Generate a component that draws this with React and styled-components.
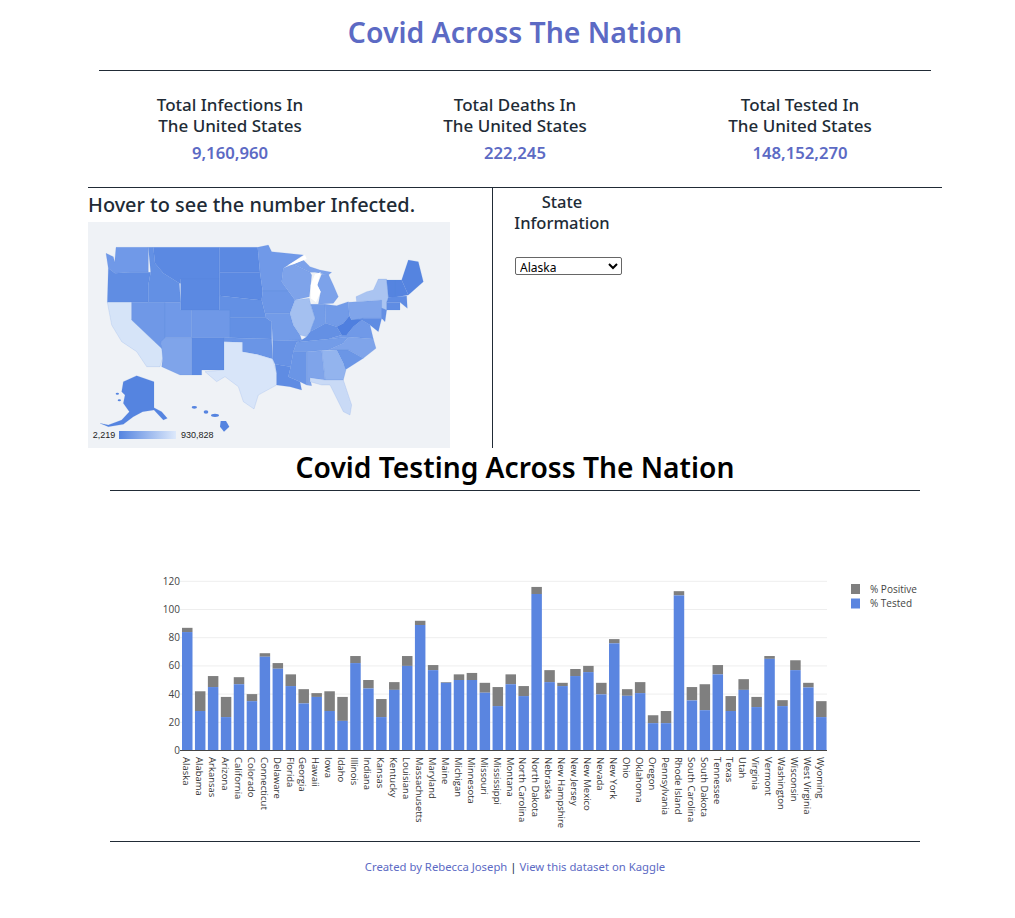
import React from "react";
import styled, { createGlobalStyle } from "styled-components";

const GlobalStyle = createGlobalStyle`
  html, body { margin: 0; padding: 0; background: #fff; overflow-x: hidden; }
  body { font-family: "Noto Sans", "Open Sans", sans-serif; color: #212b36; }
`;

const stats = [
  { label: "Total Infections In", value: "9,160,960" },
  { label: "Total Deaths In", value: "222,245" },
  { label: "Total Tested In", value: "148,152,270" },
];

// [name, total % (positive + tested), % tested]
const testing = [
  ["Alaska", 87, 84], ["Alabama", 42, 28], ["Arkansas", 52.8, 45], ["Arizona", 38, 23.7],
  ["California", 52, 47], ["Colorado", 40, 35], ["Connecticut", 69, 66.5], ["Delaware", 62, 58],
  ["Florida", 54, 45.7], ["Georgia", 43.5, 33.4], ["Hawaii", 40.7, 38], ["Iowa", 42, 28],
  ["Idaho", 38, 21], ["Illinois", 67, 62], ["Indiana", 50, 44], ["Kansas", 36.5, 23.7],
  ["Kentucky", 48.5, 43], ["Louisiana", 67, 60], ["Massachusetts", 92, 89], ["Maryland", 60.6, 57],
  ["Maine", 48.5, 48], ["Michigan", 54, 50], ["Minnesota", 55, 50], ["Missouri", 48, 41],
  ["Mississippi", 45, 31.5], ["Montana", 54, 47], ["North Carolina", 45.7, 38.6], ["North Dakota", 116, 111],
  ["Nebraska", 57, 48.5], ["New Hampshire", 48, 45.7], ["New Jersey", 57.8, 52.8], ["New Mexico", 60, 55.6],
  ["Nevada", 48, 39.8], ["New York", 79, 76], ["Ohio", 43.5, 38.8], ["Oklahoma", 48.5, 40.7],
  ["Oregon", 25, 19.4], ["Pennsylvania", 28, 19.4], ["Rhode Island", 113, 110], ["South Carolina", 45, 35.5],
  ["South Dakota", 47, 28.6], ["Tennessee", 60.6, 54], ["Texas", 38.6, 28], ["Utah", 50.6, 43],
  ["Virginia", 38, 30.8], ["Vermont", 67, 65], ["Washington", 35.7, 31.5], ["Wisconsin", 64, 57],
  ["West Virginia", 48, 44.7], ["Wyoming", 35, 23.7],
];

const stateNames = testing.map((row) => row[0]);

// state outlines traced by eye from the reference, [colour, points]
const mapStates = [
  ["#7099e8", "78,205 100,215 104,232 108,187 205,187 205,262 150,262 105,265 85,250"],
  ["#608de3", "85,250 105,265 150,262 212,262 205,300 205,352 82,352"],
  ["#d6e4f8", "82,352 155,352 155,405 250,495 248,520 240,545 200,545 170,500 125,470 95,420"],
  ["#6f98e7", "155,352 255,352 255,490 243,470 250,495 155,405"],
  ["#6390e4", "205,187 220,187 225,235 250,265 298,295 302,352 205,352 205,300 212,262"],
  ["#5b89e2", "220,187 418,187 418,282 302,282 302,295 298,295 250,265 225,235"],
  ["#5b89e2", "302,282 418,282 418,375 302,375"],
  ["#7099e8", "255,352 302,352 302,375 335,375 335,458 255,458"],
  ["#6f98e7", "335,375 450,375 450,458 335,458"],
  ["#7fa4ea", "255,458 335,458 335,570 300,570 245,545 248,520 243,470"],
  ["#5d8be3", "335,458 432,458 432,555 365,555 365,570 335,570"],
  ["#5b89e2", "418,187 533,187 540,262 418,262"],
  ["#5b89e2", "418,262 540,262 548,318 545,345 535,345 418,332"],
  ["#6390e4", "418,332 535,345 545,345 555,385 558,398 450,398 450,375 418,375"],
  ["#6390e4", "450,398 558,398 575,410 575,462 450,458"],
  ["#6a95e6", "432,458 575,462 578,522 530,508 487,500 487,472 432,470"],
  ["#d8e5f9", "432,470 487,472 487,500 530,508 578,522 590,565 590,600 535,630 522,672 490,650 475,605 435,575 410,590 375,560 432,555"],
  ["#7099e8", "533,187 565,180 575,200 620,205 670,210 610,250 605,290 625,318 548,318 540,262"],
  ["#6d97e7", "548,318 625,318 645,345 630,385 555,385 545,345"],
  ["#729be8", "555,385 630,385 640,420 660,450 665,465 578,468 575,410 558,398"],
  ["#6792e5", "578,468 665,465 650,472 640,500 632,545 585,538 578,522"],
  ["#5f8ce3", "585,538 632,545 625,575 660,590 665,615 630,605 590,600 590,565"],
  ["#7ea3ea", "610,250 640,238 665,250 690,262 695,270 692,300 688,335 645,345 625,318 605,290"],
  ["#a4c0f0", "645,345 688,340 692,358 705,400 695,430 680,455 660,450 640,420 630,385"],
  ["#739ce8", "692,358 735,358 737,415 710,430 690,440 705,400"],
  ["#7ca2ea", "725,268 745,268 760,300 775,335 760,355 715,358 722,320 712,300"],
  ["#7ca2ea", "640,238 670,225 690,245 720,255 755,262 745,270 705,262 690,262 665,250"],
  ["#729be8", "735,358 770,362 805,350 808,392 790,415 770,425 737,415"],
  ["#6490e4", "665,465 680,455 690,440 710,430 737,415 770,425 785,450 745,462 650,472"],
  ["#739ce8", "650,472 745,462 805,456 790,475 745,495 680,500 640,500"],
  ["#7099e8", "745,462 785,450 800,450 820,425 845,405 870,420 880,462 805,456"],
  ["#4f7fdf", "770,425 790,415 808,392 815,405 850,400 845,405 820,425 800,450 785,450"],
  ["#7fa4ea", "805,352 830,350 905,345 915,370 905,400 850,400 815,405 808,392"],
  ["#aac4f1", "828,335 860,320 880,315 895,282 920,282 925,337 920,352 920,375 905,370 905,345 830,350"],
  ["#6590e4", "905,370 920,375 915,410 905,400"],
  ["#5f8ce3", "815,405 850,400 905,400 895,440 870,420 845,405"],
  ["#7fa4ea", "745,495 790,475 805,456 880,462 888,490 850,520 805,495 770,495"],
  ["#6b96e6", "770,495 805,495 850,520 795,555 790,535"],
  ["#93b4ee", "725,497 770,495 790,535 798,555 790,585 735,585"],
  ["#7fa4ea", "680,500 725,497 735,585 690,580 695,602 680,600"],
  ["#6a95e6", "640,500 680,500 680,600 660,590 625,575 632,545"],
  ["#c9daf6", "690,578 735,585 790,585 815,660 810,690 790,680 765,630 750,600 725,600 690,590"],
  ["#5584e0", "985,225 1015,230 1030,290 985,330 965,285"],
  ["#5584e0", "945,285 965,285 985,330 945,337"],
  ["#5584e0", "920,285 945,285 945,337 925,337"],
  ["#5f8ce3", "925,337 980,333 982,370 960,352 920,352"],
  ["#5f8ce3", "920,352 960,352 960,375 920,375"],
  ["#5584e0", "130,590 170,572 222,590 222,668 245,680 262,700 250,705 222,675 188,680 160,695 130,718 85,725 60,715 85,720 125,705 148,680 130,655 135,630 125,620"],
];

const Page = styled.div`
  width: 1030px;
`;

const Title = styled.h1`
  margin: 0;
  height: 70px;
  display: flex;
  align-items: center;
  justify-content: center;
  padding-bottom: 6px;
  box-sizing: border-box;
  font-size: 28.4px;
  font-weight: 600;
  color: #5c6ac4;
`;

const Rule = styled.hr`
  margin: 0 auto;
  border: 0;
  height: 1px;
  background: #212b36;
  width: ${(props) => props.$width}px;
`;

const Stats = styled.section`
  display: grid;
  grid-template-columns: repeat(3, 285px);
  justify-content: center;
  height: 116px;
  padding-top: 23px;
  box-sizing: border-box;
`;

const Stat = styled.div`
  text-align: center;
  font-size: 17px;
  line-height: 21px;
  font-weight: 500;
`;

const StatValue = styled.div`
  margin-top: 6px;
  font-size: 16.7px;
  color: #5c6ac4;
  font-weight: 600;
`;

const Split = styled.section`
  width: 854px;
  height: 260px;
  margin: 0 auto;
  display: grid;
  grid-template-columns: 405px 1fr;
`;

const MapColumn = styled.div`
  border-right: 1px solid #212b36;
`;

const MapHeading = styled.h2`
  margin: 0;
  height: 34px;
  font-size: 19.9px;
  line-height: 34px;
  font-weight: 500;
  white-space: nowrap;
`;

const MapImage = styled.svg`
  display: block;
  width: 362px;
  height: 226px;
  background: #eff2f6;
`;

const InfoColumn = styled.div`
  padding: 3px 0 0 21px;
`;

const InfoHeading = styled.h3`
  margin: 0;
  width: 96px;
  text-align: center;
  font-size: 16.5px;
  line-height: 21px;
  font-weight: 500;
`;

const StateSelect = styled.select`
  display: block;
  margin: 24px 0 0 1px;
  width: 107px;
  height: 18px;
  font-family: "Noto Sans", sans-serif;
  font-size: 12px;
  padding: 0;
  background: #fff;
  border: 1px solid #666;
  border-radius: 2px;
  color: #000;
`;

const SectionTitle = styled.h1`
  margin: 0;
  height: 42px;
  line-height: 39px;
  text-align: center;
  font-size: 28.2px;
  font-weight: 600;
  color: #000;
`;

const Chart = styled.svg`
  display: block;
  width: 810px;
  height: 350px;
  margin: 0 auto;
`;

const Footer = styled.footer`
  padding-top: 16px;
  text-align: center;
  font-size: 11.3px;
  line-height: 18px;
  color: #212b36;
`;

const FooterLink = styled.a`
  color: #5c6ac4;
  text-decoration: none;
`;

const USMap = () => (
  <MapImage viewBox="24 111 1086 678">
    <defs>
      <linearGradient id="legendScale">
        <stop offset="0" stopColor="#5584e0" />
        <stop offset="1" stopColor="#dde9fb" />
      </linearGradient>
    </defs>
    {mapStates.map(([fill, points], index) => (
      <polygon key={index} points={points} fill={fill} stroke="#5a86dc" strokeOpacity="0.3" strokeWidth="1.5" />
    ))}
    <polygon points="692,300 705,268 722,262 712,300 722,320 708,352 692,340" fill="#fff" />
    <polygon points="625,240 675,210 680,222 640,238" fill="#fff" />
    <g fill="#5584e0">
      <ellipse cx="343" cy="667" rx="8" ry="4" />
      <ellipse cx="378" cy="681" rx="7" ry="5" />
      <ellipse cx="405" cy="691" rx="12" ry="5" />
      <polygon points="422,708 438,708 448,725 432,740 420,725" />
      <ellipse cx="118" cy="646" rx="5" ry="3" />
      <ellipse cx="112" cy="626" rx="5" ry="3" />
    </g>
    <text x="38" y="760" fontFamily="Liberation Sans" fontSize="27" fill="#222">2,219</text>
    <rect x="117" y="738" width="171" height="24" fill="url(#legendScale)" />
    <text x="303" y="760" fontFamily="Liberation Sans" fontSize="27" fill="#222">930,828</text>
  </MapImage>
);

// plot coordinates are relative to the chart svg, which starts at (110, 491)
const baseY = 259.5;
const unit = 1.41;
const barLeft = 72;
const barStep = 12.94;

const TestingChart = () => (
  <Chart viewBox="0 0 810 350">
    {[20, 40, 60, 80, 100, 120].map((tick) => (
      <line key={tick} x1="70" x2="717" y1={baseY - tick * unit} y2={baseY - tick * unit} stroke="#eee" />
    ))}
    {[0, 20, 40, 60, 80, 100, 120].map((tick) => (
      <text key={tick} x="70" y={baseY - tick * unit + 3.5} textAnchor="end" fontFamily="Open Sans" fontSize="10" fill="#444">
        {tick}
      </text>
    ))}
    {testing.map(([name, total, tested], index) => {
      const x = barLeft + index * barStep;
      return (
        <g key={name}>
          <rect x={x} y={baseY - total * unit} width="10.5" height={(total - tested) * unit} fill="#7f7f7f" />
          <rect x={x} y={baseY - tested * unit} width="10.5" height={tested * unit} fill="#5a85e0" />
          <text
            transform={`translate(${x + 1} 266) rotate(90)`}
            fontFamily="Open Sans"
            fontSize="9.5"
            fill="#333"
          >
            {name}
          </text>
        </g>
      );
    })}
    <line x1="70" x2="717" y1={baseY} y2={baseY} stroke="#444" />
    <rect x="741" y="93" width="9" height="10" fill="#7f7f7f" />
    <text x="760" y="102" fontFamily="Open Sans" fontSize="10" fill="#444">% Positive</text>
    <rect x="741" y="107.5" width="9" height="10" fill="#5a85e0" />
    <text x="760" y="116" fontFamily="Open Sans" fontSize="10" fill="#444">% Tested</text>
  </Chart>
);

const App = () => (
  <Page>
    <GlobalStyle />
    <Title>Covid Across The Nation</Title>
    <Rule $width={832} />
    <Stats>
      {stats.map((stat) => (
        <Stat key={stat.label}>
          {stat.label}
          <br />
          The United States
          <StatValue>{stat.value}</StatValue>
        </Stat>
      ))}
    </Stats>
    <Rule $width={854} />
    <Split>
      <MapColumn>
        <MapHeading>Hover to see the number Infected.</MapHeading>
        <USMap />
      </MapColumn>
      <InfoColumn>
        <InfoHeading>State Information</InfoHeading>
        <StateSelect defaultValue="Alaska">
          {stateNames.map((name) => (
            <option key={name}>{name}</option>
          ))}
        </StateSelect>
      </InfoColumn>
    </Split>
    <SectionTitle>Covid Testing Across The Nation</SectionTitle>
    <Rule $width={810} />
    <TestingChart />
    <Rule $width={810} />
    <Footer>
      <FooterLink href="#">Created by Rebecca Joseph</FooterLink> |{" "}
      <FooterLink href="#">View this dataset on Kaggle</FooterLink>
    </Footer>
  </Page>
);

export default App;
